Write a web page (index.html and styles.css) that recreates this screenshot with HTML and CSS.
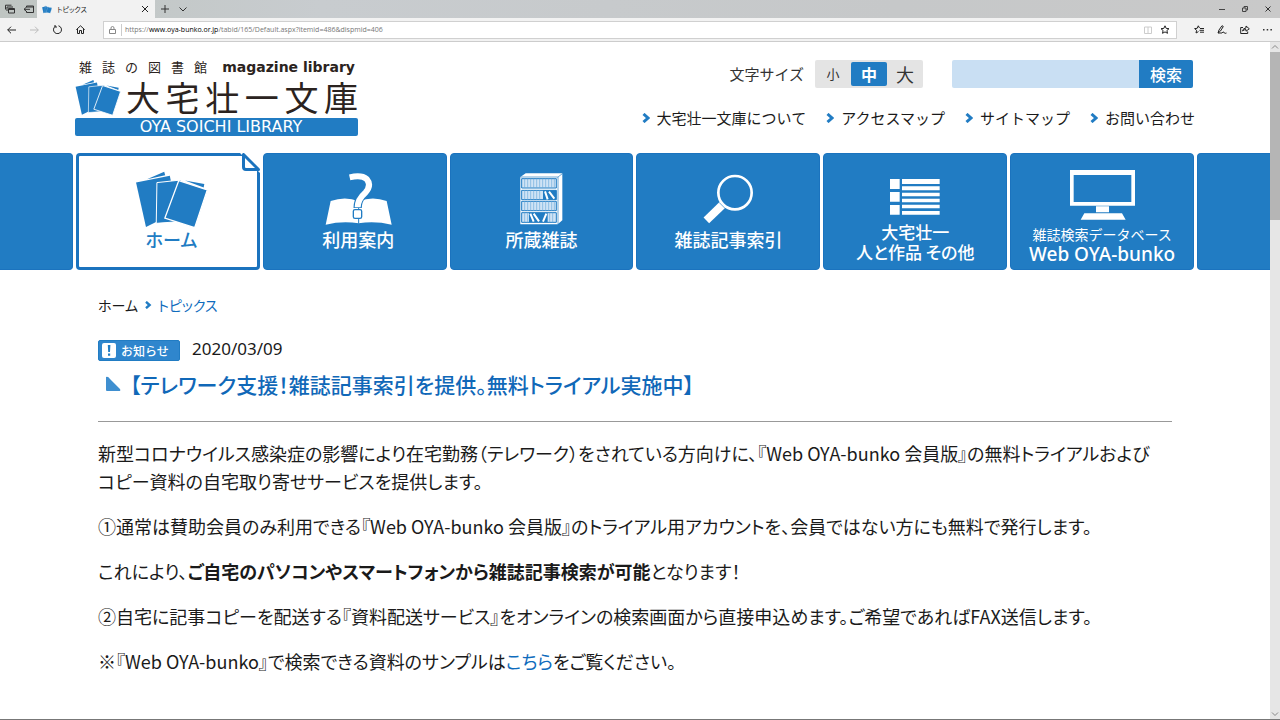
FILE: index.html
```html
<!DOCTYPE html>
<html lang="ja">
<head>
<meta charset="utf-8">
<title>トピックス</title>
<link rel="stylesheet" href="styles.css">
</head>
<body>
<svg class="defs" aria-hidden="true">
  <symbol id="books" viewBox="404 77 220 172">
    <path fill="#217cc3" d="M440 102L492 79L495 90Z"/>
    <path fill="#217cc3" d="M407 112L509 91L530 200L437 246Z"/>
    <path fill="#217cc3" stroke="#fff" stroke-width="3" d="M470 112L544 104L560 228L468 235Z"/>
    <path fill="#217cc3" d="M555 106L613 116L611 127Z"/>
    <path fill="#217cc3" stroke="#fff" stroke-width="4" d="M536 106L622 134L584 248L494 219Z"/>
  </symbol>
</svg>
<div class="browser">
  <div class="tabbar">
    <div class="tabtools">
      <svg width="10" height="10" viewBox="0 0 10 10" fill="none" stroke="#333"><path d="M3.5 4.5h6v4.5h-6zM3.500 5.500h6M2 7V3h6M.5 5.500V1.200h6"/></svg>
      <svg width="11" height="10" viewBox="0 0 11 10" fill="none" stroke="#333"><path d="M3.500 3.500V2h7v6.500h-7V7M3.500 3h7M1 5.300h6M3 3.500L1 5.300L3 7"/></svg>
    </div>
    <div class="tab">
      <svg width="10" height="9"><use href="#books"/></svg>
      <span class="tabname">トピックス</span>
      <button class="icon" aria-label="タブを閉じる"><svg width="6" height="6" viewBox="0 0 6 6" stroke="#222"><path d="M0 0L6 6M6 0L0 6"/></svg></button>
    </div>
    <button class="icon" aria-label="新しいタブ"><svg width="8" height="8" viewBox="0 0 8 8" stroke="#333"><path d="M4 0V8M0 4H8"/></svg></button>
    <button class="icon" aria-label="タブ一覧"><svg width="8" height="5" viewBox="0 0 8 5" fill="none" stroke="#333"><path d="M.5 .5L4 4L7.500 .5"/></svg></button>
    <div class="winbuttons">
      <button class="icon" aria-label="最小化"><svg width="6" height="6" viewBox="0 0 6 6" stroke="#444"><path d="M0 3.500H6"/></svg></button>
      <button class="icon" aria-label="元に戻す"><svg width="6" height="6" viewBox="0 0 6 6" fill="none" stroke="#444"><path d="M.5 2h3.500v3.500H.5zM2 2V.5h3.500V4H4"/></svg></button>
      <button class="icon" aria-label="閉じる"><svg width="6" height="6" viewBox="0 0 6 6" stroke="#333"><path d="M.5 .5L5.500 5.500M5.500 .5L.5 5.500"/></svg></button>
    </div>
  </div>
  <div class="toolbar">
    <div class="navbuttons">
      <button class="icon" aria-label="戻る"><svg width="9" height="8" viewBox="0 0 9 8" fill="none" stroke="#222"><path d="M.7 4H9M4 .7L.7 4L4 7.300"/></svg></button>
      <button class="icon" aria-label="進む"><svg width="9" height="8" viewBox="0 0 9 8" fill="none" stroke="#bbb"><path d="M0 4H8.300M5 .7L8.300 4L5 7.300"/></svg></button>
      <button class="icon" aria-label="更新"><svg width="9" height="9" viewBox="0 0 9 9" fill="none" stroke="#222"><path d="M2.500 1.200A4 4 0 1 0 5.500 .8M1 1h2v2"/></svg></button>
      <button class="icon" aria-label="ホーム"><svg width="9" height="9" viewBox="0 0 9 9" fill="none" stroke="#222"><path d="M.3 4.700L4.500 .8L8.700 4.700M1.500 4v4.500h2V5.500h2v3h2V4"/></svg></button>
    </div>
    <div class="address">
      <svg width="7" height="8" viewBox="0 0 7 8" fill="none" stroke="#888"><path d="M.5 3.500h6v4h-6zM2 3.500V2a1.500 1.500 0 0 1 3 0v1.500"/></svg>
      <span class="url">https://<b>www.oya-bunko.or.jp</b>/tabid/165/Default.aspx?itemid=486&amp;dispmid=406</span>
      <svg width="8" height="8" viewBox="0 0 8 8" fill="none" stroke="#ccc"><path d="M.5 1h7v6.500h-7zM4 1v6.500"/></svg>
      <svg width="10" height="9" viewBox="0 0 10 9" fill="none" stroke="#222"><path d="M5 .8L6.200 3.400L9 3.700L6.900 5.500L7.500 8.300L5 6.900L2.500 8.300L3.100 5.500L1 3.700L3.800 3.400Z"/></svg>
    </div>
    <div class="actions">
      <button class="icon" aria-label="お気に入り"><svg width="10" height="9" viewBox="0 0 10 9" fill="none" stroke="#222"><path d="M5.500 3L4.300 .8L3.200 3.300L.6 3.600L2.600 5.300L2 8L4.500 6.600M6 3.500h4M5.500 5.300H10M6 7.200h4"/></svg></button>
      <button class="icon" aria-label="メモ"><svg width="10" height="9" viewBox="0 0 10 9" fill="none" stroke="#222"><path d="M1 8L2 5L5 .7L6.300 1.500L3.500 6L1 8H5Q6 6 7 7.500T9.500 8"/></svg></button>
      <button class="icon" aria-label="共有"><svg width="10" height="9" viewBox="0 0 10 9" fill="none" stroke="#222"><path d="M3 2.500H.7v6h7V6.500M2.500 6Q3 3 6 3V1L9.300 3.800L6 6.200V4.600Q4 4.500 2.500 6Z"/></svg></button>
      <button class="icon" aria-label="その他"><svg width="9" height="2" viewBox="0 0 9 2" fill="#333"><path d="M0 0h1.500v1.500H0zM3.700 0h1.500v1.500H3.700zM7.400 0h1.500v1.500H7.400z"/></svg></button>
    </div>
  </div>
  <div class="view">
    <div class="page">
      <header class="header">
        <a class="logo" href="#">
          <span class="logo-top">
            <span class="logo-kanji"><span>雑</span><span>誌</span><span>の</span><span>図</span><span>書</span><span>館</span></span>
            <span class="logo-mag">magazine library</span>
          </span>
          <span class="logo-main">
            <svg width="46" height="37"><use href="#books"/></svg>
            <span class="logo-name"><span>大</span><span>宅</span><span>壮</span><span>一</span><span>文</span><span>庫</span></span>
          </span>
          <span class="logo-bar">OYA SOICHI LIBRARY</span>
        </a>
        <div class="tools">
          <div class="tools-top">
            <span class="size-label">文字サイズ</span>
            <div class="sizes">
              <button class="small">小</button><button class="medium">中</button><button class="large">大</button>
            </div>
            <form class="search">
              <input type="text" aria-label="検索キーワード">
              <button type="button">検索</button>
            </form>
          </div>
          <nav class="links">
            <a href="#"><svg class="arrow" viewBox="0 0 8 10"><path d="M1.500 1L6 5L1.500 9"/></svg>大宅壮一文庫について</a>
            <a href="#"><svg class="arrow" viewBox="0 0 8 10"><path d="M1.500 1L6 5L1.500 9"/></svg>アクセスマップ</a>
            <a href="#"><svg class="arrow" viewBox="0 0 8 10"><path d="M1.500 1L6 5L1.500 9"/></svg>サイトマップ</a>
            <a href="#"><svg class="arrow" viewBox="0 0 8 10"><path d="M1.500 1L6 5L1.500 9"/></svg>お問い合わせ</a>
          </nav>
        </div>
      </header>
      <nav class="menu">
        <span class="cell side-left"></span>
        <div class="menu-items">
          <a class="cell current lead" href="#">
            <svg class="fold" viewBox="0 0 20 20"><path fill="#fff" d="M0 0H20V20Z"/><path fill="#fff" stroke="#1b73be" stroke-width="3" stroke-linejoin="round" d="M3.500 1.500V14Q3.500 16.500 6 16.500H18.500Z"/></svg>
            <span class="pic"><svg width="73" height="57"><use href="#books"/></svg></span>
            <span class="label">ホーム</span>
          </a>
          <a class="cell lead" href="#">
            <span class="pic"><svg width="67" height="52" viewBox="973 85 201 156">
              <path fill="#fff" d="M990 169Q1035 153 1074 170Q1115 153 1158 169L1173 240Q1122 228 1074 236Q1025 228 975 240Z"/>
              <path fill="none" stroke="#217cc3" stroke-width="3" d="M1074 190V237"/>
              <path fill="none" stroke="#217cc3" stroke-width="25" d="M1084 154Q1071 168 1071 190"/>
              <path fill="none" stroke="#fff" stroke-width="18" d="M1047 98Q1083 90 1098 103Q1114 122 1094 144Q1071 164 1071 188"/>
              <rect x="1058" y="195" width="25" height="26" rx="5" fill="#fff" stroke="#217cc3" stroke-width="4"/>
            </svg></span>
            <span class="label">利用案内</span>
          </a>
          <a class="cell" href="#">
            <span class="pic"><svg width="43" height="52" viewBox="245 86 129 156">
              <path fill="#fff" d="M246 98L262 87H372V228L358 240H246Z"/>
              <path fill="none" stroke="#217cc3" stroke-width="2" d="M246 98H359V240M359 98L372 88"/>
              <path fill="#cfe3f5" stroke="#217cc3" stroke-width="3" d="M250 103H354V131H250ZM250 138H354V166H250ZM250 171H354V199H250ZM250 205H354V234H250Z"/>
              <path stroke="#6daadb" stroke-width="2" d="M259 103V131M268 103V131M277 103V131M286 103V131M295 103V131M304 103V131M313 103V131M322 103V131M331 103V131M340 103V131M348 103V131M259 138V166M268 138V166M277 138V166M286 138V166M295 138V166M304 138V166M259 171V199M268 171V199M277 171V199M286 171V199M295 171V199M304 171V199M313 171V199M322 171V199M331 171V199M340 171V199M348 171V199M259 205V234M268 205V234M334 205V234M343 205V234"/>
              <path fill="#217cc3" d="M314 138H354V166H314ZM272 205H328V234H272Z"/>
              <path stroke="#fff" stroke-width="6" d="M320 141L328 165M332 142L348 163M276 208L286 232M286 208L302 231M324 208L314 232"/>
            </svg></span>
            <span class="label">所蔵雑誌</span>
          </a>
          <a class="cell" href="#">
            <span class="pic"><svg width="50" height="50" viewBox="791 91 150 150" fill="none" stroke="#fff">
              <circle cx="887" cy="147" r="50" stroke-width="8"/>
              <path stroke-width="24" d="M852 181L801 230"/>
              <path stroke="#217cc3" stroke-width="2" d="M839 176L858 195"/>
            </svg></span>
            <span class="label">雑誌記事索引</span>
          </a>
          <a class="cell two" href="#">
            <span class="pic"><svg width="50" height="36" viewBox="234 101 150 108" fill="#fff">
              <path d="M234 101h29v30h-29zM234 140h29v29h-29zM234 179h29v29h-29zM270 101h113v15H270zM270 123h113v12H270zM270 142h113v11H270zM270 160h113v11H270zM270 178h113v11H270zM270 197h113v11H270z"/>
            </svg></span>
            <span class="label">大宅壮一</span>
            <span class="label">人と作品 その他</span>
          </a>
          <a class="cell two" href="#">
            <span class="pic raised"><svg width="65" height="50" viewBox="772 76 195 150" fill="#fff">
              <path fill-rule="evenodd" d="M772 76H967V183H772ZM783 91V172H956V91ZM850 185H889V203H850ZM815 206H928L939 225H804Z"/>
            </svg></span>
            <span class="label minor">雑誌検索データベース</span>
            <span class="label latin">Web OYA-bunko</span>
          </a>
        </div>
        <span class="cell side-right"></span>
      </nav>
      <main class="content">
        <nav class="crumbs"><a href="#">ホーム</a><svg class="arrow" viewBox="0 0 8 10"><path d="M1.500 1L6 5L1.500 9"/></svg><a class="here" href="#">トピックス</a></nav>
        <div class="meta">
          <span class="badge"><svg width="14" height="15" viewBox="0 0 14 15"><rect width="14" height="15" rx="2" fill="#fff"/><path fill="#217cc3" d="M5.800 2h2.600l-.4 7h-1.800zM6 10.500h2.200v2.200H6z"/></svg>お知らせ</span>
          <time datetime="2020-03-09">2020/03/09</time>
        </div>
        <h1><svg width="16" height="16" viewBox="0 0 16 16"><path fill="#3f8fd0" d="M1 1Q3 0 5 3L15 13Q16 15 14 15H2Q1 15 1 14Z"/></svg>【テレワーク支援！雑誌記事索引を提供。無料トライアル実施中】</h1>
        <div class="body">
          <p>新型コロナウイルス感染症の影響により在宅勤務（テレワーク）をされている方向けに、『Web OYA-bunko 会員版』の無料トライアルおよび<br>コピー資料の自宅取り寄せサービスを提供します。</p>
          <p>①通常は賛助会員のみ利用できる『Web OYA-bunko 会員版』のトライアル用アカウントを、会員ではない方にも無料で発行します。</p>
          <p>これにより、<b>ご自宅のパソコンやスマートフォンから雑誌記事検索が可能</b>となります！</p>
          <p>②自宅に記事コピーを配送する『資料配送サービス』をオンラインの検索画面から直接申込めます。ご希望であればFAX送信します。</p>
          <p>※『Web OYA-bunko』で検索できる資料のサンプルは<a href="#">こちら</a>をご覧ください。</p>
        </div>
      </main>
    </div>
    <div class="scrollbar">
      <svg width="10" height="10" viewBox="0 0 10 10" fill="none" stroke="#888"><path d="M2 6.500L5 3.500L8 6.500"/></svg>
      <span class="thumb"></span>
      <svg width="10" height="10" viewBox="0 0 10 10" fill="none" stroke="#888"><path d="M2 3.500L5 6.500L8 3.500"/></svg>
    </div>
  </div>
</div>
</body>
</html>
```
FILE: styles.css
```css
* { box-sizing: border-box; }
body { margin: 0; font-family: "Noto Sans CJK JP", sans-serif; color: #1a1a1a; background: #fff; }
a { color: inherit; text-decoration: none; }
button { font: inherit; border: 0; padding: 0; background: none; color: inherit; }
svg { flex: none; display: block; }
.defs { width: 0; height: 0; position: absolute; }
.icon { display: flex; }

.browser { height: 100vh; display: flex; flex-direction: column; border-bottom: 1px solid #777; overflow: hidden; }
.tabbar { display: flex; align-items: center; height: 18px; background: linear-gradient(90deg, #bfc5c2, #c8cccf 25%, #c6c8c9 70%, #c9c9c9); gap: 10px; }
.tabtools { display: flex; gap: 8px; padding-left: 5px; width: 37px; margin-right: -10px; }
.tab { display: flex; align-items: center; width: 118px; height: 18px; background: #f2f2f2; padding: 0 7px 0 5px; gap: 5px; margin-right: -4px; }
.tabname { flex: 1; font-size: 7px; line-height: 18px; font-feature-settings: "palt"; }
.winbuttons { display: flex; gap: 17px; margin-left: auto; padding-right: 9px; }
.toolbar { display: flex; align-items: center; height: 24px; background: #f2f2f2; border-bottom: 1px solid #ccc; }
.navbuttons { display: flex; align-items: center; gap: 14px; padding-left: 7px; width: 103px; }
.address { flex: 1; display: flex; align-items: center; gap: 8px; height: 18px; background: #fff; border: 1px solid #d0d0d0; padding: 0 6px 0 5px; }
.url { flex: 1; border-left: 1px solid #ccc; padding-left: 3px; margin-left: -3px; font: 7px/12px "Open Sans", sans-serif; color: #777; }
.url b { font-weight: 400; color: #000; }
.actions { display: flex; align-items: center; gap: 13px; padding: 0 8px 0 17px; }

.view { flex: 1; display: flex; min-height: 0; }
.page { flex: 1; min-width: 0; }
.scrollbar { width: 10px; background: #e6e6e6; display: flex; flex-direction: column; }
.thumb { height: 168px; background: #b5b5b5; margin-bottom: auto; }

.header { display: flex; justify-content: space-between; max-width: 1120px; height: 111px; margin: 0 auto; padding-top: 16px; }
.logo { display: flex; flex-direction: column; width: 283px; color: #2b2320; }
.logo-top { display: flex; justify-content: space-between; align-items: center; height: 18px; padding: 0 3px 0 4px; }
.logo-kanji { display: flex; gap: 10px; font-size: 13px; line-height: 18px; }
.logo-mag { font: bold 14px/18px "DejaVu Sans", sans-serif; }
.logo-main { display: flex; justify-content: space-between; align-items: center; height: 42px; }
.logo-name { display: flex; justify-content: space-between; width: 232px; font-size: 34px; line-height: 42px; }
.logo-bar { height: 18px; border-radius: 2px; background: #217cc3; color: #fff; font: 16px/18px "DejaVu Sans", sans-serif; text-align: center; padding-left: 9px; }
.tools { display: flex; flex-direction: column; align-items: flex-end; gap: 17px; padding-top: 2px; }
.tools-top { display: flex; align-items: center; padding-right: 2px; }
.size-label { font-size: 15px; line-height: 28px; color: #333; margin-right: 11px; }
.sizes { display: flex; align-items: center; height: 28px; width: 108px; background: #e4e4e4; border-radius: 2px; color: #333; }
.sizes button { flex: 1; line-height: 24px; }
.sizes .small { font-size: 13px; }
.sizes .medium { font-size: 16px; font-weight: 700; background: #217cc3; color: #fff; border-radius: 2px; }
.sizes .large { font-size: 18px; }
.search { display: flex; height: 28px; margin: 0 0 0 29px; }
.search input { width: 187px; border: 0; padding: 0 6px; background: #c9dff3; border-radius: 2px 0 0 2px; }
.search button { width: 54px; background: #217cc3; color: #fff; font-size: 16px; font-weight: 500; line-height: 28px; border-radius: 0 2px 2px 0; }
.links { display: flex; gap: 20px; font-size: 15px; line-height: 26px; }
.links a { display: flex; align-items: center; gap: 7px; }
.arrow { width: 8px; height: 10px; fill: none; stroke: #217cc3; stroke-width: 3; }
.crumbs .arrow { height: 8px; }

.menu { display: grid; grid-template-columns: 1fr minmax(0, 1118px) 1fr; gap: 3px; height: 117px; }
.menu-items { display: grid; grid-template-columns: repeat(6, 1fr); gap: 3px; }
.cell { position: relative; display: flex; flex-direction: column; align-items: center; background: #217cc3; color: #fff; border-radius: 4px; border: 1px solid #1b73be; }
.side-left { border-left: 0; border-radius: 0 4px 4px 0; }
.side-right { border-right: 0; border-radius: 4px 0 0 4px; }
.lead { padding-left: 7px; }
.current { background: #fff; color: #217cc3; border: 0; box-shadow: inset 0 0 0 3px #1b73be; }
.fold { position: absolute; top: 0; right: 0; width: 20px; height: 20px; }
.pic { display: flex; align-items: center; height: 72px; padding-top: 18px; }
.current .pic { height: 73px; padding-top: 19px; }
.label { font-size: 18px; font-weight: 500; line-height: 26px; font-feature-settings: "palt"; }
.two .pic { height: 68px; }
.two .pic.raised { padding-top: 14px; }
.two .label { font-size: 17px; line-height: 20px; }
.two .minor { font-size: 14px; font-weight: 400; line-height: 24px; font-feature-settings: normal; }
.two .latin { font-family: "Noto Sans", sans-serif; font-size: 19px; line-height: 16px; }

.content { max-width: 1074px; margin: 0 auto; padding-top: 25px; }
.crumbs { display: flex; align-items: center; gap: 6px; font-size: 14px; line-height: 20px; font-feature-settings: "palt"; }
.here, .body a { color: #0f6cbd; }
.meta { display: flex; align-items: center; gap: 12px; margin-top: 22px; height: 24px; }
.badge { display: flex; align-items: center; gap: 5px; width: 82px; height: 21px; padding-left: 3px; margin-top: 3px; background: #2f86cd; border: 1px solid #217cc3; border-radius: 2px; color: #fff; font-size: 12px; font-weight: 500; }
time { font: 17px/24px "Noto Sans", sans-serif; }
h1 { display: flex; align-items: center; gap: 9px; margin: 8px 0 0; padding: 0 0 22px 7px; border-bottom: 1px solid #999; color: #1068b8; font-size: 21px; font-weight: 500; line-height: 30px; font-feature-settings: "palt"; }
.body { padding-top: 17px; font-size: 18px; line-height: 28px; font-feature-settings: "palt"; }
.body p { margin: 0 0 17px; }
```
